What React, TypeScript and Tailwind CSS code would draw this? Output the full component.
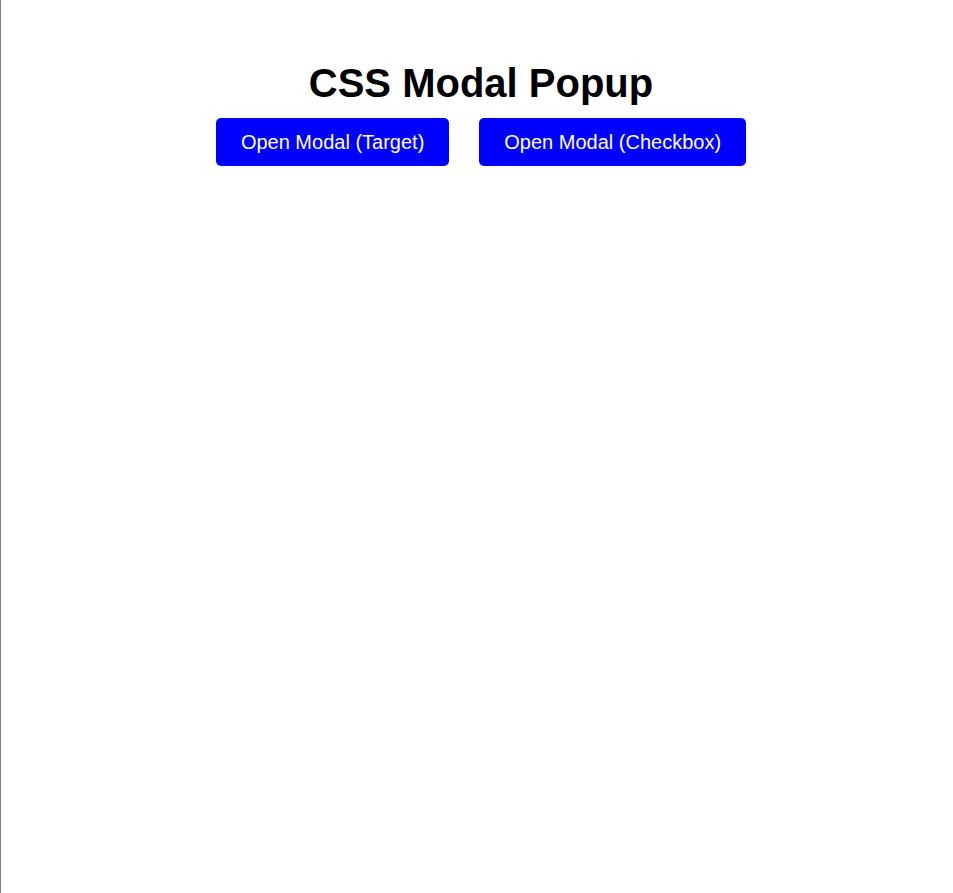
const buttons = ["Open Modal (Target)", "Open Modal (Checkbox)"];

export default function App() {
  return (
    <div className="min-h-[893px] border-l border-[#808080] bg-white pl-2 font-['Liberation_Sans',Arial,sans-serif]">
      <div className="flex flex-col items-center pt-[60px]">
        <h1 className="text-[40px] font-bold leading-[46px] text-black">CSS Modal Popup</h1>
        <div className="mt-[12px] flex gap-[30px]">
          {buttons.map((label) => (
            <button
              key={label}
              className="h-12 rounded-[5px] bg-[#0000ff] px-[25px] text-[20px] leading-[23px] text-white"
            >
              {label}
            </button>
          ))}
        </div>
      </div>
    </div>
  );
}
